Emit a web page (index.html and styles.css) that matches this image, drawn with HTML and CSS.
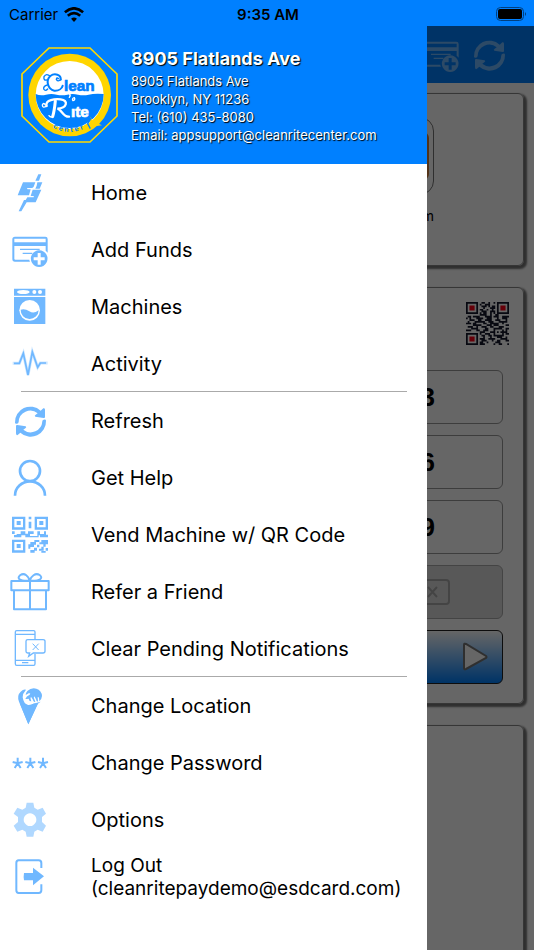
FILE: index.html
```html
<!DOCTYPE html>
<html lang="en">
<head>
<meta charset="utf-8">
<meta name="viewport" content="width=device-width, initial-scale=1">
<title>Clean Rite Center</title>
<link rel="stylesheet" href="styles.css">
</head>
<body>
<svg class="defs" aria-hidden="true">
  <symbol id="i-card" viewBox="30 194 120 120">
    <path d="M45 214H136Q143 214 143 221V262A28 28 0 0 0 137 256V242H43V280Q43 283 46 283H88Q88 286 90 289H45Q37 289 37 281V222Q37 214 45 214ZM43 220V231H137V220Z" fill-rule="evenodd"/>
    <path d="M60 250H119V254H60ZM68 262H97V266H68Z"/>
    <path d="M117.500 255a25 25 0 1 0 .1 0ZM113 263H122V276H134V285H122V298H113V285H101V276H113Z" fill-rule="evenodd"/>
  </symbol>
  <symbol id="i-refresh" viewBox="30 47 120 120">
    <path d="M45 112A46 46 0 0 1 122 76L130 69Q135 67 135 73V96Q134 99 131 98L106 94Q102 91 107 88L113 84A35 35 0 0 0 56 110Q55 115 51 115Q45 116 45 112Z"/>
    <path d="M138 106A46 46 0 0 1 61 142L53 149Q48 151 48 144V121Q49 118 52 119L77 123Q81 126 76 129L70 133A35 35 0 0 0 127 108Q127 103 131 103Q138 101 138 106Z"/>
  </symbol>
</svg>

<div class="app">
  <header class="status">
    <div class="status-left">Carrier
      <svg class="wifi" viewBox="192 15 60 46" aria-label="Wi-Fi"><path d="M222 61L213 51Q222 44 231 51Z"/><path d="M194 31Q222 7 250 31M203 42Q222 25 241 42" fill="none" stroke="#000" stroke-width="8"/></svg>
    </div>
    <time class="clock">9:35 AM</time>
    <svg class="battery" viewBox="0 0 31 15" aria-label="Battery"><rect x=".5" y=".5" width="27" height="13" rx="4" fill="none" stroke="#004080"/><rect x="2" y="2" width="24" height="10" rx="2"/><path d="M29 5q2 2 0 4z" fill="#003b77"/></svg>
  </header>

  <div class="stage">
    <main class="page">
      <div class="toolbar">
        <a href="#" aria-label="Add funds"><svg class="tool-icon"><use href="#i-card"/></svg></a>
        <a href="#" aria-label="Refresh"><svg class="tool-icon"><use href="#i-refresh"/></svg></a>
      </div>
      <section class="card shortcuts">
        <div class="tile" aria-hidden="true"><span></span></div>
        <p>m</p>
      </section>
      <section class="card vend">
        <svg class="qr" viewBox="0 0 25 25" role="img" aria-label="QR code">
          <path d="M.5.5h6v6h-6zM18.500.5h6v6h-6zM.5 18.500h6v6h-6z" fill="none"/>
          <path d="M9 .5h2m2 0h1m2 0h1M8 1.500h1m2 0h3M9 2.500h3m1 0h1m1 0h2M10 3.500h1m3 0h3M8 4.500h2m2 0h1m2 0h1M9 5.500h3m2 0h3M8 6.500h1m1 0h2m2 0h1m1 0h1M8 7.500h4m2 0h1m2 0h2M1 8.500h2m1 0h4m3 0h4m1 0h3m2 0h4M0 9.500h1m1 0h1m3 0h4m2 0h3m3 0h1m2 0h3M2 10.500h3m2 0h2m2 0h4m2 0h3m3 0h1M1 11.500h1m3 0h6m2 0h3m3 0h5M0 12.500h3m1 0h2m4 0h2m2 0h5m2 0h1M4 13.500h5m3 0h3m1 0h3m4 0h2M1 14.500h3m2 0h1m2 0h3m2 0h2m3 0h3M3 15.500h4m4 0h2m3 0h5m2 0h2M0 16.500h3m3 0h2m2 0h3m3 0h1m4 0h1m1 0h1M8 17.500h3m3 0h3m1 0h1m1 0h4M8 18.500h1m2 0h3m2 0h1m4 0h1m1 0h2M9 19.500h2m2 0h2m1 0h6M10 20.500h1m3 0h1m3 0h3m2 0h1M8 21.500h3m2 0h4m3 0h4M9 22.500h3m3 0h1m2 0h2m3 0h2M8 23.500h2m2 0h1m4 0h3M8 24.500h3m5 0h1m2 0h2m3 0h1" fill="none"/>
          <path class="qr-eye" d="M2 2h3v3h-3zM20 2h3v3h-3zM2 20h3v3h-3z"/>
        </svg>
        <div class="keypad">
          <button aria-label="1"></button><button aria-label="2"></button><button>3</button>
          <button aria-label="4"></button><button aria-label="5"></button><button>6</button>
          <button aria-label="7"></button><button aria-label="8"></button><button>9</button>
          <button class="muted" aria-label="Clear"></button><button aria-label="0"></button>
          <button class="muted" aria-label="Delete"><svg class="delete" viewBox="0 0 44 26"><path d="M2 13L12 1H40Q43 1 43 4V22Q43 25 40 25H12ZM22 8L31 18M31 8L22 18"/></svg></button>
          <button class="go" aria-label="Start"><svg class="play" viewBox="0 0 26 30"><path d="M2 3Q2 1 4 2L24 14Q25 15 24 16L4 27Q2 28 2 26Z"/></svg></button>
        </div>
      </section>
      <section class="card extra"></section>
    </main>

    <div class="scrim"></div>

    <aside class="drawer">
      <div class="profile">
        <svg class="logo" viewBox="60 138 297 294" role="img" aria-label="Clean Rite Center">
          <path d="M147 144H270L351 222V348L270 426H147L66 348V222Z" fill="none" stroke="#ffd900" stroke-width="5"/>
          <circle cx="209" cy="285" r="124" fill="#ffd500"/>
          <circle cx="209" cy="285" r="102" fill="#fff"/>
          <path d="M107 282Q122 288 138 284T170 284T202 284T234 284T266 284T311 282A102 102 0 0 1 107 282Z" fill="#0080ff"/>
          <path d="M151 371Q178 389 209 387Q240 386 260 371L269 391Q210 424 152 387Z" fill="#ffd500"/>
          <path d="M272 350L279 364L306 376L268 381Z" fill="#ffd500"/>
          <path d="M274 353L263 371L271 386" fill="none" stroke="#0080ff" stroke-width="4"/>
          <g fill="none" stroke="#0080ff" stroke-linecap="round">
            <path d="M182 239C184 224 164 218 151 228C137 240 142 268 163 272C177 273 186 265 188 257" stroke-width="6"/>
            <path d="M183 238Q174 247 169 238Q170 231 176 236M151 229Q139 218 132 230Q130 242 140 240M142 255Q130 258 131 267Q136 275 143 267" stroke-width="4"/>
          </g>
          <text class="logo-word" x="192" y="273" fill="#0080ff" stroke="#0080ff">lean</text>
          <g fill="none" stroke="#fff" stroke-linecap="round">
            <path d="M166 303C164 323 162 337 158 350" stroke-width="9"/>
            <path d="M140 318C133 299 167 296 182 298C207 301 201 325 172 326C185 328 190 352 207 350" stroke-width="7"/>
            <path d="M140 318Q127 326 127 315Q131 306 136 315M158 350Q151 353 147 347M208 292Q213 285 208 281" stroke-width="4"/>
            <path d="M219 302Q227 299 223 293Q216 294 218 301" stroke-width="4"/>
          </g>
          <text class="logo-word" x="213" y="351" fill="#fff" stroke="#fff">&#305;te</text>
          <path id="arc" d="M158 382Q209 411 266 380" fill="none"/>
          <text class="logo-small"><textPath href="#arc">c e n t e r</textPath></text>
        </svg>
        <address class="store">
          <strong>8905 Flatlands Ave</strong>
          8905 Flatlands Ave<br>
          Brooklyn, NY 11236<br>
          Tel: (610) 435-8080<br>
          Email: appsupport@cleanritecenter.com
        </address>
      </div>
      <nav>
        <ul class="menu">
          <li><a href="#"><svg class="icon" viewBox="30 23 120 120"><path d="M106 46L115 27H124L117 46ZM69 51H106L101 64Q99 68 94 68H82Q80 71 83 72H92L87 90H53ZM112 51H127L119 70H106Q108 65 110 61ZM98 73H124L107 111H80L64 138H56L72 104H77L82 96H101Q103 93 100 92H92Z"/></svg><span>Home</span></a></li>
          <li><a href="#"><svg class="icon"><use href="#i-card"/></svg><span>Add Funds</span></a></li>
          <li><a href="#"><svg class="icon" viewBox="30 365 120 120"><path d="M42 370H136V391H42ZM42 395H136V476H42Z"/><g fill="#fff"><ellipse cx="70" cy="380" rx="19" ry="6"/><circle cx="103" cy="380" r="6"/><circle cx="120" cy="380" r="6"/><circle cx="89" cy="435" r="31"/></g><path d="M62 433Q75 429 88 438T116 435A27 27 0 0 1 62 433Z"/></svg><span>Machines</span></a></li>
          <li><a href="#"><svg class="icon pulse" viewBox="30 536 120 120"><path class="glow" d="M38 594H58L70 564L84 629L97 560L113 606L121 593H143"/><path d="M42 594H58L70 564L84 629L97 560L113 606L121 593H138"/></svg><span>Activity</span></a></li>
        </ul>
        <hr>
        <ul class="menu">
          <li><a href="#"><svg class="icon"><use href="#i-refresh"/></svg><span>Refresh</span></a></li>
          <li><a href="#"><svg class="icon line" viewBox="30 218 120 120"><g stroke-width="8"><circle cx="90" cy="257" r="30"/><path d="M45 331A45 43 0 0 1 135 331"/></g></svg><span>Get Help</span></a></li>
          <li><a href="#"><svg class="icon" viewBox="30 389 120 120"><path d="M36 394H76V433H36ZM43 401V426H69V401ZM104 394H144V433H104ZM111 401V426H137V401ZM36 463H76V502H36ZM43 470V495H69V470Z" fill-rule="evenodd"/><path d="M50 407H62V419H50ZM118 407H130V419H118ZM50 476H62V488H50ZM86 394H94V402H86ZM86 409H94V429H86ZM36 438H44V446H36ZM50 446H62V438H76V445H84V438H101V446H90V452H112V438H120V446H132V438H138V448H144V456H120V450H116V456H76V450H64V456H42V449H50ZM85 477H91V470H103V464H118V470H108V478H102V485H91V490H85ZM124 464H144V477H137V484H130V477H118V471H124ZM111 478H118V486H111ZM91 494H102V487H111V496H104V502H91ZM117 490H124V484H131V496H117ZM137 488H144V496H137ZM124 497H137V502H124Z"/></svg><span>Vend Machine w/ QR Code</span></a></li>
          <li><a href="#"><svg class="icon line" viewBox="30 35 120 120"><g stroke-width="6" stroke-linejoin="round"><path d="M34 62H146V90H34ZM42 90V147H138V90M90 62V147M89 61C56 63 50 53 61 44C74 36 86 48 89 61C93 48 106 36 119 44C130 53 122 63 89 61"/></g></svg><span>Refer a Friend</span></a></li>
          <li><a href="#"><svg class="icon line" viewBox="30 206 120 120"><g stroke-width="4"><path d="M105 236V215Q105 211 101 211H50Q46 211 46 215V310Q46 315 50 315H101Q105 315 105 310V281M46 222H105M46 300H105M66 307H85"/><path d="M83 238H129Q135 238 135 243V273Q135 278 129 278H100L86 288L89 278H83Q78 278 78 273V243Q78 238 83 238Z"/><path d="M98 250L116 269M116 250L98 269" stroke-width="3"/></g></svg><span>Clear Pending Notifications</span></a></li>
        </ul>
        <hr>
        <ul class="menu">
          <li><a href="#"><svg class="icon" viewBox="30 377 120 120"><path d="M85 492L57 424Q50 405 62 394Q70 386 78 388Q68 399 68 411Q71 431 84 434Q92 435 100 430L122 424L114 430L85 492Z"/><path d="M84 434Q92 435 100 430L114 428L85 492L60 430Z"/><path d="M82 392Q94 381 109 385Q125 390 126 407Q125 418 118 423L117 414Q115 408 113 411L114 423Q110 426 108 417L104 409Q100 408 102 414L106 424Q101 427 98 417L94 411Q90 410 92 416L94 423Q87 423 86 415Q80 416 76 416Q79 407 89 403Q94 398 86 399L77 404Q77 398 82 392Z"/></svg><span>Change Location</span></a></li>
          <li><a href="#"><svg class="icon line" viewBox="30 38 120 120"><path stroke-width="6" d="M53 82V99M38 95L53 99L68 95M53 99L44 113M53 99L62 113M91 82V99M76 95L91 99L106 95M91 99L82 113M91 99L100 113M129 82V99M114 95L129 99L144 95M129 99L120 113M129 99L138 113"/></svg><span>Change Password</span></a></li>
          <li><a href="#"><svg class="icon pale" viewBox="30 209 120 120"><path fill-rule="evenodd" d="M80 217H100L103 232L113 238L128 232L138 250L126 260V275L138 286L128 304L113 298L103 304L100 319H80L77 304L67 298L52 304L41 286L54 275V260L41 250L52 232L67 238L77 232ZM90 249A19 19 0 1 0 90.100 249Z"/></svg><span>Options</span></a></li>
          <li><a href="#" class="logout"><svg class="icon" viewBox="30 380 120 120"><path fill="none" stroke="currentColor" stroke-width="6" d="M124 413V398Q124 390 116 390H56Q49 390 49 398V480Q49 488 56 488H116Q124 488 124 480V462"/><path d="M72 428H99V412L132 438L99 465V450H72Q70 439 72 428Z"/></svg><span>Log Out<br>(cleanritepaydemo@esdcard.com)</span></a></li>
        </ul>
      </nav>
    </aside>
  </div>
</div>
</body>
</html>
```
FILE: styles.css
```css
* { box-sizing: border-box; }

body {
  margin: 0;
  font-family: Inter, "Liberation Sans", sans-serif;
  color: #000;
}

a { color: inherit; text-decoration: none; }

.defs { display: none; }

.app {
  display: flex;
  flex-direction: column;
  height: 100vh;
  overflow: hidden;
}

/* Status bar */
.status {
  display: grid;
  grid-template-columns: 1fr auto 1fr;
  align-items: center;
  height: 26px;
  padding: 2px 7px 0 9px;
  background: #0080ff;
  font-size: 15px;
}
.status-left { display: flex; align-items: center; gap: 6px; }
.wifi { width: 20px; height: 15px; }
.clock { font-weight: 600; }
.battery { justify-self: end; width: 31px; height: 15px; }

.stage { position: relative; flex: 1; min-height: 0; }

/* Page behind the drawer */
.page { height: 100%; overflow: hidden; background: #fff; }
.toolbar {
  display: flex;
  justify-content: flex-end;
  align-items: center;
  gap: 8px;
  height: 57px;
  padding-right: 25px;
  background: #0080ff;
}
.toolbar a { display: flex; color: #70b8ff; }
.tool-icon { width: 40px; height: 40px; fill: currentColor; }

.card {
  margin: 0 10px 21px;
  border: 1px solid #888;
  border-radius: 6px;
  box-shadow: 2px 2px 2px 1px #777;
}
.shortcuts {
  display: flex;
  flex-direction: column;
  align-items: center;
  height: 173px;
  margin-top: 10px;
  padding-top: 23px;
}
.shortcuts p { margin: 12px 0 0; font-size: 14px; line-height: 18px; width: 334px; text-align: right; }
.tile {
  width: 334px;
  height: 78px;
  padding: 14px 4px;
  border: 1px solid #777;
  border-radius: 14px;
}
.tile span { display: block; height: 100%; border-radius: 6px; background: #d08040; }

.vend { padding: 14px 20px 19px; }
.qr { display: block; width: 43px; height: 43px; margin: 0 -6px 25px auto; stroke: #15182c; stroke-width: 1; }
.qr-eye { fill: #ff0018; stroke: none; }
.keypad { display: grid; grid-template-columns: repeat(3, 1fr); gap: 11px 10px; }
.keypad button {
  display: flex;
  align-items: center;
  justify-content: center;
  height: 54px;
  padding: 0;
  border: 1px solid #999;
  border-radius: 6px;
  background: #fff;
  color: #000;
  font: bold 26px "Liberation Sans", sans-serif;
}
.keypad .muted { background: #ddd; border-color: #aaa; }
.delete { width: 44px; height: 26px; fill: none; stroke: #aaa; stroke-width: 2; }
.keypad .go {
  grid-column: 1 / -1;
  justify-content: flex-end;
  padding-right: 14px;
  border-color: #222;
  background: linear-gradient(#fff, #0080ff);
}
.play { width: 26px; height: 30px; fill: #fff; stroke: #777; stroke-width: 2; }
.extra { height: 320px; }

.scrim { position: absolute; inset: 0; background: rgba(0, 0, 0, 0.6); }

/* Drawer */
.drawer {
  position: absolute;
  inset: 0 auto 0 0;
  width: 80%;
  overflow: hidden;
  background: #fff;
}
.profile {
  display: flex;
  align-items: flex-start;
  gap: 12px;
  padding: 20px;
  background: #0080ff;
}
.logo { flex: none; width: 99px; height: 98px; }
.logo-word { font: bold 46px "Liberation Sans", sans-serif; stroke-width: 2; }
.logo-small { font: bold 22px "Liberation Sans", sans-serif; fill: #0080ff; }
.store {
  color: #fff;
  font-size: 13px;
  font-style: normal;
  line-height: 18px;
  white-space: nowrap;
  text-shadow: 1px 1px 1px #000;
}
.store strong { display: block; font-size: 18px; font-weight: 700; line-height: 26px; }

.menu { margin: 0; padding: 0; list-style: none; }
.menu a {
  display: flex;
  align-items: center;
  gap: 41px;
  height: 57px;
  padding-left: 10px;
  font-size: 20px;
  line-height: 23px;
  white-space: nowrap;
}
.menu span { padding-top: 1px; }
.menu .logout { font-size: 19px; }
.icon { flex: none; width: 40px; height: 40px; fill: currentColor; color: #70b8ff; }
.icon.pale { color: #b0d8ff; }
.icon.line, .pulse { fill: none; stroke: currentColor; }
.icon.pulse { fill: none; stroke-width: 5; }
.pulse .glow { stroke-width: 9; opacity: 0.35; }

hr {
  height: 1px;
  margin: -1px 20px 0 21px;
  border: 0;
  background: #aaa;
}
```
